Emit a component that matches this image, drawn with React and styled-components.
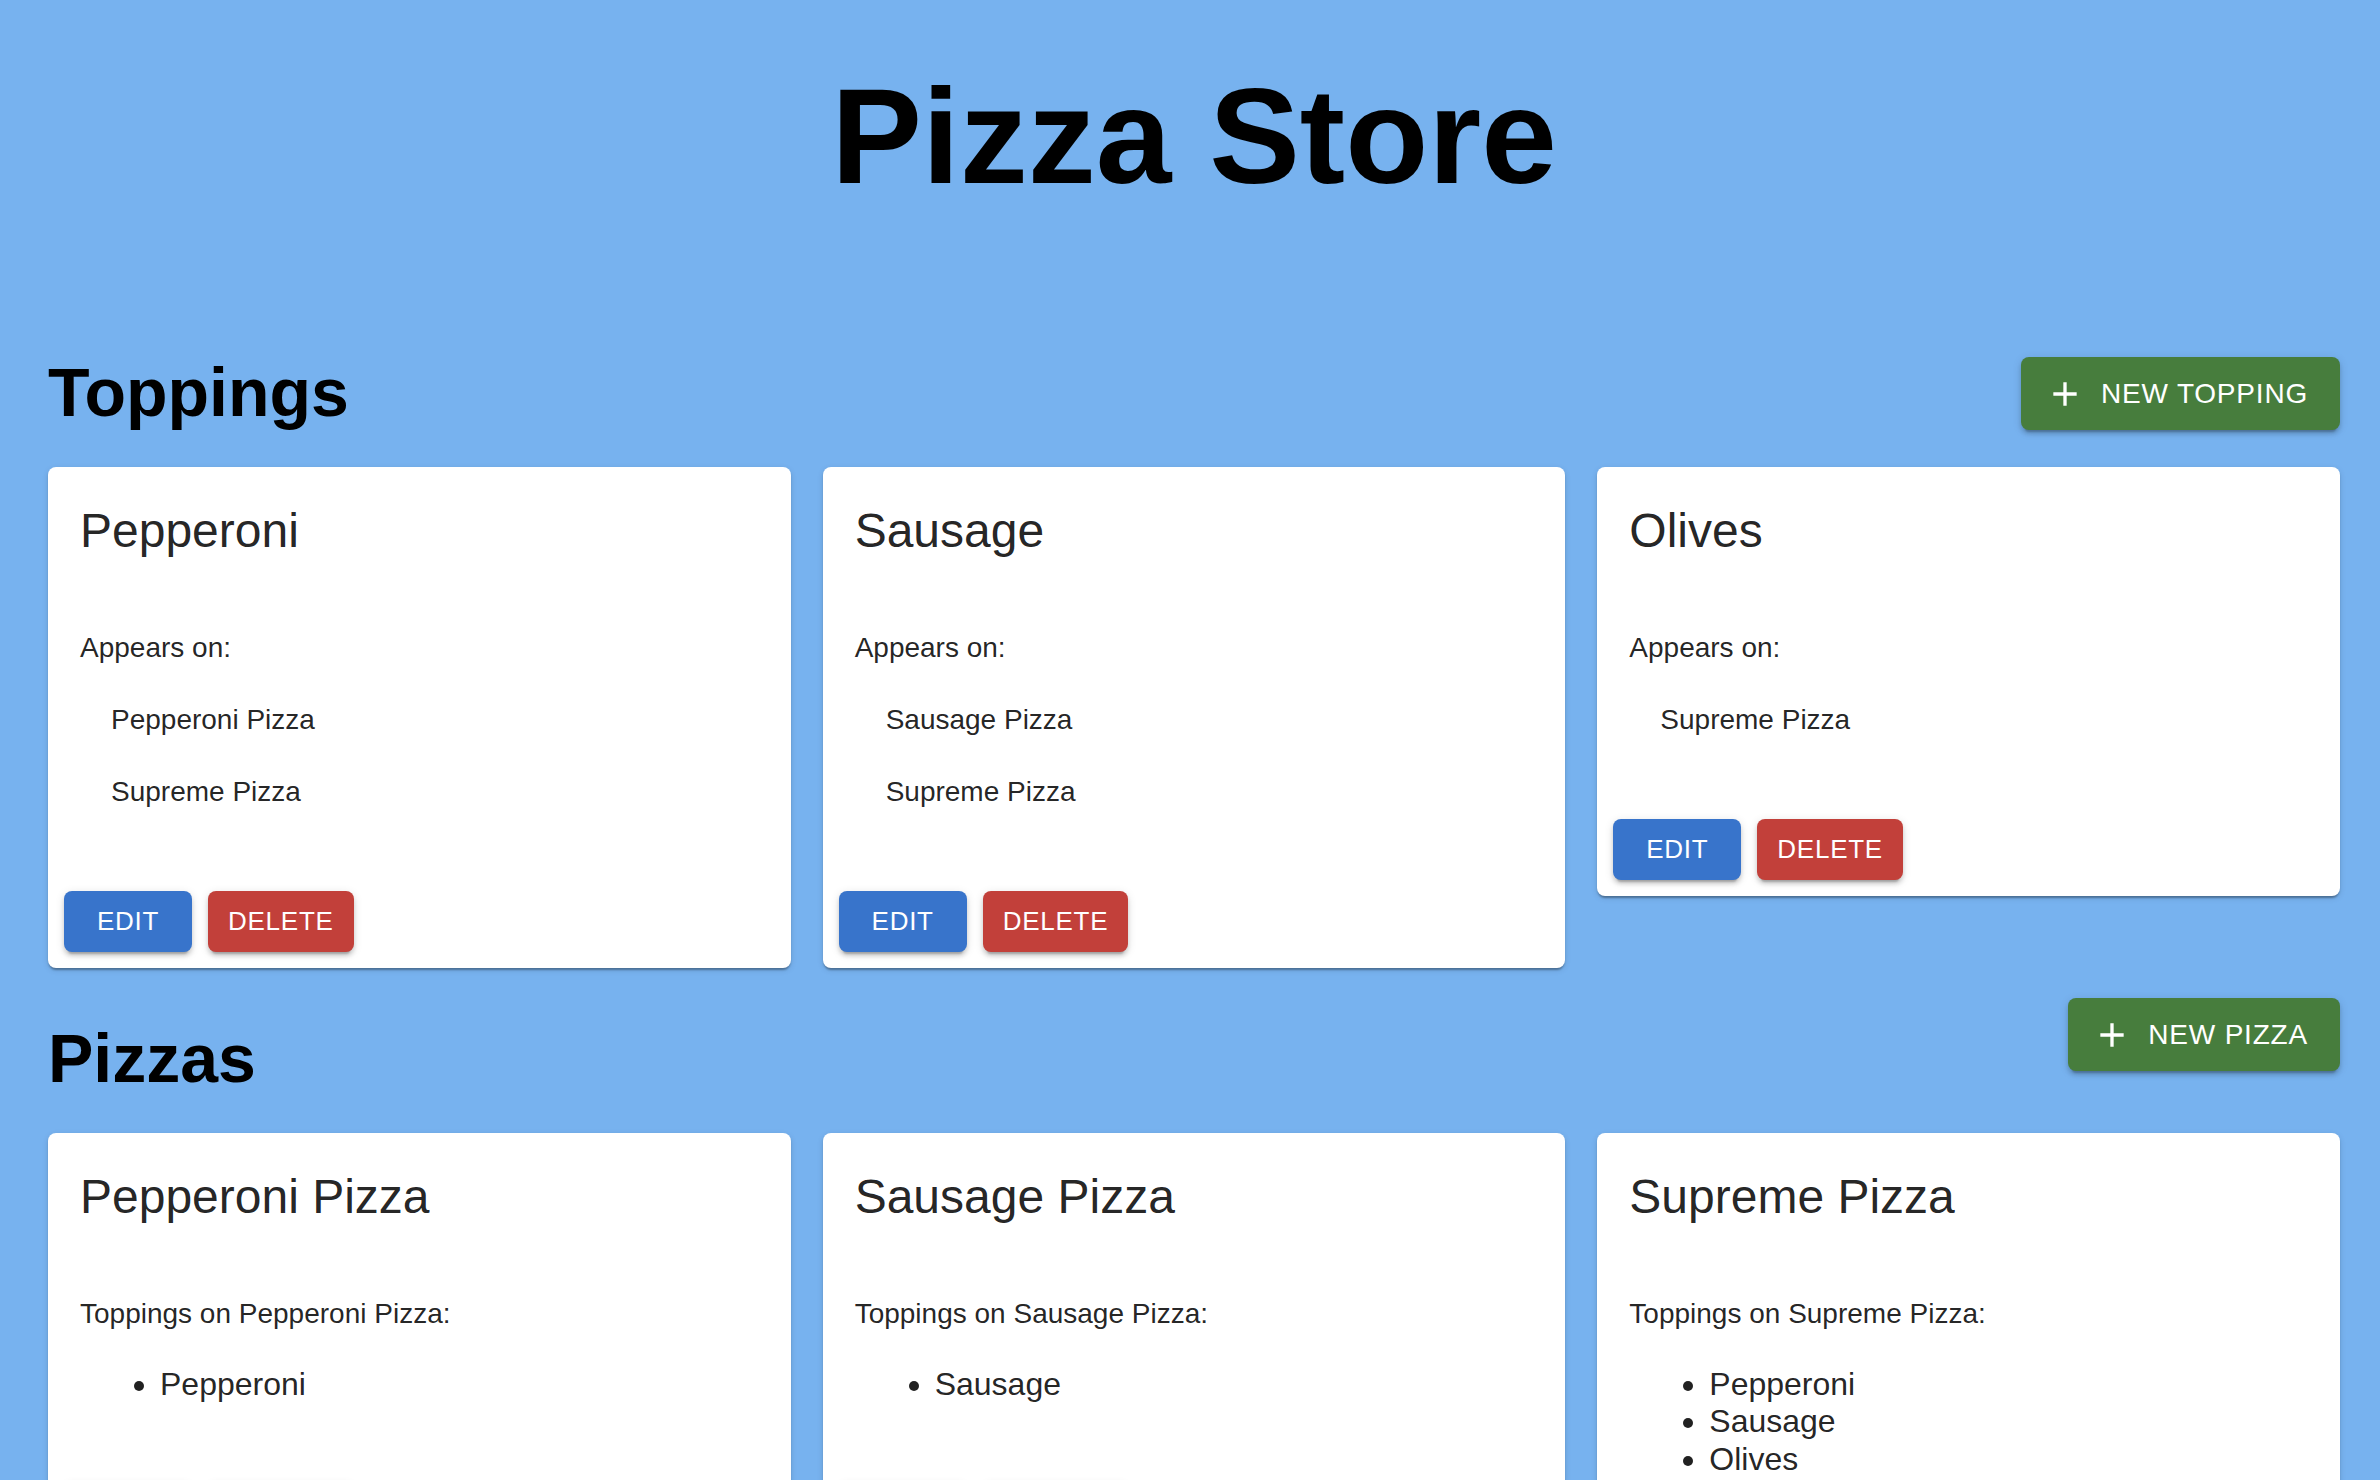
import React from "react";
import styled, { createGlobalStyle } from "styled-components";

const GlobalStyle = createGlobalStyle`
  html, body {
    margin: 0;
    padding: 0;
    background: #77b2ef;
    font-family: "Liberation Sans", Arial, Helvetica, sans-serif;
  }
  * { box-sizing: border-box; }
`;

const Page = styled.div`
  min-height: 1480px;
  padding: 0 40px 0 48px;
  background: #77b2ef;
  color: #000;
`;

const Title = styled.h1`
  margin: 0;
  padding-top: 68px;
  font-size: 136px;
  line-height: 136px;
  font-weight: 700;
  text-align: center;
  color: #000;
`;

const Section = styled.section`
  margin-top: ${(p) => p.$top}px;
`;

const HeaderRow = styled.div`
  display: flex;
  justify-content: space-between;
  align-items: flex-end;
`;

const SectionHeading = styled.h2`
  margin: 0;
  font-size: 68px;
  line-height: 68px;
  font-weight: 700;
  color: #000;
`;

const NewButton = styled.button`
  display: inline-flex;
  align-items: center;
  margin-bottom: ${(p) => p.$lift}px;
  padding: 12px 32px;
  border: 0;
  border-radius: 8px;
  background: #477d3d;
  color: #fff;
  font-family: inherit;
  font-size: 28px;
  line-height: 49px;
  font-weight: 400;
  letter-spacing: 0.8px;
  text-transform: uppercase;
  box-shadow: 0 6px 2px -4px rgba(0, 0, 0, 0.2), 0 4px 4px 0 rgba(0, 0, 0, 0.14),
    0 2px 10px 0 rgba(0, 0, 0, 0.12);
  cursor: pointer;
`;

const PlusIcon = styled.svg`
  width: 40px;
  height: 40px;
  margin-left: -8px;
  margin-right: 16px;
  fill: currentColor;
  flex: none;
`;

const CardGrid = styled.div`
  display: grid;
  grid-template-columns: repeat(3, minmax(0, 1fr));
  column-gap: 32px;
  align-items: start;
  margin-top: 41.5px;
`;

const Card = styled.div`
  background: #fff;
  border-radius: 8px;
  overflow: hidden;
  color: rgba(0, 0, 0, 0.87);
  box-shadow: 0 4px 2px -2px rgba(0, 0, 0, 0.2), 0 2px 2px 0 rgba(0, 0, 0, 0.14),
    0 2px 6px 0 rgba(0, 0, 0, 0.12);
`;

const CardContent = styled.div`
  padding: 32px;
`;

const CardTitle = styled.div`
  margin: 0 0 65px;
  font-size: 48px;
  line-height: 64px;
  font-weight: 400;
`;

const Label = styled.div`
  font-size: 28px;
  line-height: 40px;
`;

const PlainList = styled.ul`
  list-style: none;
  margin: 0;
  padding: 16px 0 14.5px;
`;

const PlainItem = styled.li`
  padding: 16px 31px;
  font-size: 28px;
  line-height: 40px;
`;

const BulletList = styled.ul`
  list-style: disc;
  margin: 32px 0;
  padding-left: 80px;
`;

const BulletItem = styled.li`
  font-size: 32px;
  line-height: 37.4px;
`;

const CardActions = styled.div`
  display: flex;
  align-items: center;
  gap: 16px;
  padding: 16px;
`;

const ActionButton = styled.button`
  min-width: 128px;
  padding: 8px 20px;
  border: 0;
  border-radius: 8px;
  background: ${(p) => (p.$danger ? "#c2403a" : "#3874cb")};
  color: #fff;
  font-family: inherit;
  font-size: 26px;
  line-height: 45.5px;
  font-weight: 400;
  letter-spacing: 0.74px;
  text-transform: uppercase;
  box-shadow: 0 6px 2px -4px rgba(0, 0, 0, 0.2), 0 4px 4px 0 rgba(0, 0, 0, 0.14),
    0 2px 10px 0 rgba(0, 0, 0, 0.12);
  cursor: pointer;
`;

const toppings = [
  { name: "Pepperoni", pizzas: ["Pepperoni Pizza", "Supreme Pizza"] },
  { name: "Sausage", pizzas: ["Sausage Pizza", "Supreme Pizza"] },
  { name: "Olives", pizzas: ["Supreme Pizza"] },
];

const pizzas = [
  { name: "Pepperoni Pizza", toppings: ["Pepperoni"] },
  { name: "Sausage Pizza", toppings: ["Sausage"] },
  { name: "Supreme Pizza", toppings: ["Pepperoni", "Sausage", "Olives"] },
];

function Plus() {
  return (
    <PlusIcon viewBox="0 0 24 24" aria-hidden="true">
      <path d="M19 13h-6v6h-2v-6H5v-2h6V5h2v6h6v2z" />
    </PlusIcon>
  );
}

function Actions() {
  return (
    <CardActions>
      <ActionButton>Edit</ActionButton>
      <ActionButton $danger>Delete</ActionButton>
    </CardActions>
  );
}

export default function App() {
  return (
    <>
      <GlobalStyle />
      <Page>
        <Title>Pizza Store</Title>

        <Section $top={153}>
          <HeaderRow>
            <SectionHeading>Toppings</SectionHeading>
            <NewButton $lift={-4.5}>
              <Plus />
              New Topping
            </NewButton>
          </HeaderRow>
          <CardGrid>
            {toppings.map((t) => (
              <Card key={t.name}>
                <CardContent>
                  <CardTitle>{t.name}</CardTitle>
                  <Label>Appears on:</Label>
                  <PlainList>
                    {t.pizzas.map((p) => (
                      <PlainItem key={p}>{p}</PlainItem>
                    ))}
                  </PlainList>
                </CardContent>
                <Actions />
              </Card>
            ))}
          </CardGrid>
        </Section>

        <Section $top={30}>
          <HeaderRow>
            <SectionHeading>Pizzas</SectionHeading>
            <NewButton $lift={20.5}>
              <Plus />
              New Pizza
            </NewButton>
          </HeaderRow>
          <CardGrid>
            {pizzas.map((p) => (
              <Card key={p.name}>
                <CardContent>
                  <CardTitle>{p.name}</CardTitle>
                  <Label>Toppings on {p.name}:</Label>
                  <BulletList>
                    {p.toppings.map((t) => (
                      <BulletItem key={t}>{t}</BulletItem>
                    ))}
                  </BulletList>
                </CardContent>
                <Actions />
              </Card>
            ))}
          </CardGrid>
        </Section>
      </Page>
    </>
  );
}
